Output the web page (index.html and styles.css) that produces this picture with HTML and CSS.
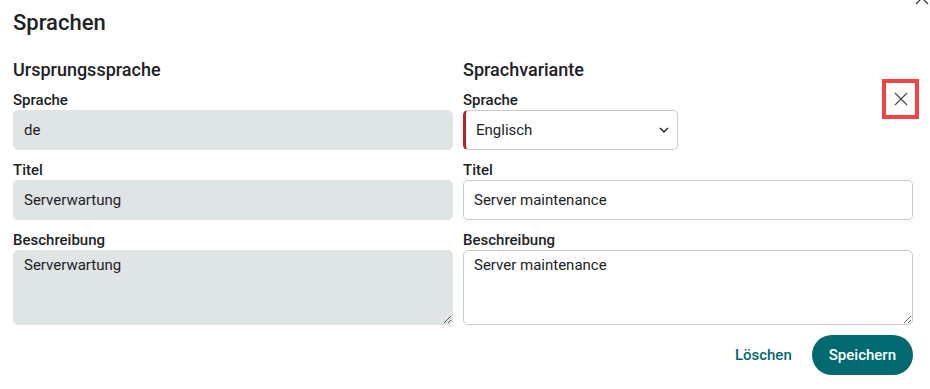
FILE: index.html
```html
<!DOCTYPE html>
<html lang="de">

<head>
    <meta charset="UTF-8">
    <meta name="viewport" content="width=device-width, initial-scale=1.0">
    <title>Sprachen</title>
    <link rel="stylesheet" href="styles.css">
</head>

<body>
    <div class="dialog">
        <button class="dialog-close" aria-label="Schließen">
            <svg width="14" height="14" viewBox="0 0 14 14"><path d="M1 1L13 13M13 1L1 13" stroke="#333" stroke-width="1.2" fill="none"/></svg>
        </button>

        <h1 class="dialog-title">Sprachen</h1>

        <div class="columns">
            <!-- Original language -->
            <div class="column">
                <h2 class="column-title">Ursprungssprache</h2>
                <label class="field-label">Sprache</label>
                <input class="field readonly" type="text" value="de" readonly>
                <label class="field-label">Titel</label>
                <input class="field readonly" type="text" value="Serverwartung" readonly>
                <label class="field-label">Beschreibung</label>
                <textarea class="field area readonly" readonly>Serverwartung</textarea>
            </div>

            <!-- Variant -->
            <div class="column">
                <h2 class="column-title">Sprachvariante</h2>
                <label class="field-label" for="lang">Sprache</label>
                <div class="select-wrap">
                    <select id="lang" class="field select">
                        <option>Englisch</option>
                        <option>Französisch</option>
                    </select>
                    <svg class="chevron" width="10" height="6" viewBox="0 0 10 6"><path d="M1 1l4 4 4-4" stroke="#222" stroke-width="1.4" fill="none"/></svg>
                </div>
                <label class="field-label" for="title">Titel</label>
                <input id="title" class="field" type="text" value="Server maintenance">
                <label class="field-label" for="desc">Beschreibung</label>
                <textarea id="desc" class="field area">Server maintenance</textarea>
            </div>
        </div>

        <button class="remove-variant" aria-label="Variante entfernen">
            <svg width="14" height="14" viewBox="0 0 14 14"><path d="M1 1L13 13M13 1L1 13" stroke="#444" stroke-width="1.1" fill="none"/></svg>
        </button>

        <div class="actions">
            <button class="btn btn-text">Löschen</button>
            <button class="btn btn-primary">Speichern</button>
        </div>
    </div>
</body>

</html>
```

FILE: styles.css
```css
/* Base */
body {
    margin: 0;
    font-family: Roboto, "Liberation Sans", Arial, sans-serif;
    color: #1d2226;
    background: #fff;
}

.dialog {
    position: relative;
    width: 900px;
    padding: 8px 17px 0 13px;
}

.dialog-title {
    margin: 0;
    font-size: 22px;
    font-weight: 500;
    line-height: 30px;
}

/* Two columns */
.columns {
    display: grid;
    grid-template-columns: 440px 450px;
    column-gap: 10px;
    margin-top: 18px;
}

.column {
    display: flex;
    flex-direction: column;
}

.column-title {
    margin: 0 0 6px;
    font-size: 18px;
    font-weight: 500;
    line-height: 28px;
}

.field-label {
    font-size: 15px;
    font-weight: 500;
    line-height: 20px;
}

.field {
    box-sizing: border-box;
    width: 100%;
    height: 40px;
    margin-bottom: 10px;
    padding: 0 10px;
    border: 1px solid #c5cccf;
    border-radius: 5px;
    background: #fff;
    font-family: inherit;
    font-size: 15px;
    color: #1d2226;
    outline: none;
}

.field.readonly {
    border-color: #dfe4e4;
    background: #dfe4e4;
}

.field.area {
    height: 75px;
    padding-top: 5px;
    resize: vertical;
    display: block;
}

.select-wrap {
    position: relative;
    width: 215px;
}

.select {
    appearance: none;
    border-left: 3px solid #b8232b;
    padding-left: 10px;
}

.chevron {
    position: absolute;
    right: 9px;
    top: 17px;
    pointer-events: none;
}

/* Red-marked remove button */
.remove-variant {
    position: absolute;
    left: 882px;
    top: 79px;
    width: 37px;
    height: 40px;
    box-sizing: border-box;
    border: 4px solid #f24444;
    background: #fff;
    display: flex;
    align-items: center;
    justify-content: center;
    padding: 0;
    cursor: pointer;
}

.dialog-close {
    position: absolute;
    left: 915px;
    top: -9px;
    width: 14px;
    height: 14px;
    padding: 0;
    border: none;
    background: none;
}

.dialog-close svg {
    display: block;
}

/* Footer */
.actions {
    display: flex;
    justify-content: flex-end;
    align-items: center;
    gap: 20px;
}

.btn {
    font-family: inherit;
    font-size: 15px;
    font-weight: 500;
    border: none;
    cursor: pointer;
}

.btn-text {
    background: none;
    color: #006a70;
    padding: 0;
}

.btn-primary {
    height: 40px;
    padding: 0 17px;
    border-radius: 20px;
    background: #006a70;
    color: #fff;
}
```
